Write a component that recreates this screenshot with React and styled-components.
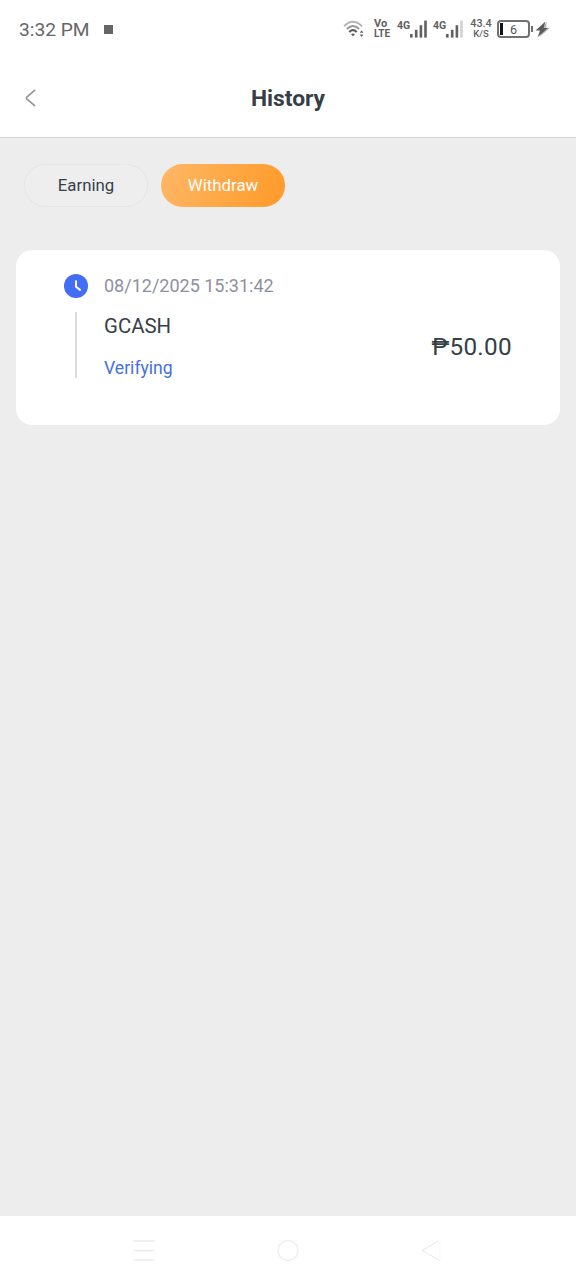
import React from 'react';
import styled, { createGlobalStyle } from 'styled-components';

const GlobalStyle = createGlobalStyle`
  * {
    box-sizing: border-box;
  }

  body {
    margin: 0;
    background-color: #ededed;
    font-family: Roboto, "Liberation Sans", sans-serif;
    color: #363e48;
  }

  button {
    font-family: inherit;
  }

  svg {
    display: block;
    flex-shrink: 0;
  }
`;

const Wifi = () => (
  <svg width="22" height="18" viewBox="0 0 22 18" fill="none">
    <path d="M1 6.2Q10 -2.6 19 6.2" stroke="#b4b4b4" strokeWidth="2" />
    <path d="M3.9 9Q10 2.8 16.1 9" stroke="#999999" strokeWidth="2" />
    <path d="M6.3 12Q10 8.4 13.7 12" stroke="#5c5c5c" strokeWidth="2.2" />
    <path d="M8 14Q10 12.8 12 14L10 16.4Z" fill="#5c5c5c" />
    <path d="M16.8 12.8L18.6 10.3L20.4 12.8ZM16.8 14.4L18.6 16.9L20.4 14.4Z" fill="#5c5c5c" />
  </svg>
);

const Signal = ({ weak }) => (
  <svg width="17" height="18" viewBox="0 0 17 18" fill="#606060">
    <rect x="0" y="14" width="2.6" height="3.6" />
    <rect x="4.9" y="9.8" width="2.6" height="7.8" />
    <rect x="9.6" y="5.2" width="2.6" height="12.4" />
    <rect x="14.2" y="0.6" width="2.6" height="17" fill={weak ? '#d2d2d2' : '#606060'} />
  </svg>
);

const Bolt = () => (
  <svg width="16" height="17" viewBox="0 0 16 17">
    <path d="M11.8 0.5L5.2 9.6H8.3L4 16.5L15 6.8H11Z" fill="#b5b5b5" />
    <path d="M10.4 0.5L0.6 9.4H5L2.6 16.2L12.8 7H8.6Z" fill="#5b5b5b" />
  </svg>
);

const Clock = () => (
  <svg width="24" height="24" viewBox="0 0 24 24">
    <circle cx="12" cy="12" r="12" fill="#446df6" />
    <path
      d="M12 7.2V12.7L16 15.9"
      fill="none"
      stroke="#ffffff"
      strokeWidth="2"
      strokeLinecap="round"
      strokeLinejoin="round"
    />
  </svg>
);

const App = () => {
  return (
    <Screen>
      <GlobalStyle />
      <StatusBar>
        <Time>3:32 PM</Time>
        <Recording />
        <StatusIcons>
          <Wifi />
          <Stacked $width={18} $gap={9}>
            <span>Vo</span>
            <span>LTE</span>
          </Stacked>
          <Network>4G</Network>
          <Signal />
          <Network $gap={6}>4G</Network>
          <Signal weak />
          <Stacked $width={22} $gap={7} $speed>
            <span>43.4</span>
            <span>K/S</span>
          </Stacked>
          <Battery>6</Battery>
          <Bolt />
        </StatusIcons>
      </StatusBar>
      <Header>
        <BackButton aria-label="Back">
          <svg width="12" height="18" viewBox="0 0 12 18" fill="none">
            <path
              d="M10.6 1.3L2.8 8.2Q2 9 2.8 9.8L10.6 16.7"
              stroke="#999999"
              strokeWidth="1.8"
              strokeLinecap="round"
            />
          </svg>
        </BackButton>
        <Title>History</Title>
      </Header>
      <Content>
        <Tabs>
          <Tab>Earning</Tab>
          <Tab $active>Withdraw</Tab>
        </Tabs>
        <Card>
          <Timeline>
            <Clock />
            <Line />
          </Timeline>
          <Details>
            <DateText>08/12/2025 15:31:42</DateText>
            <Method>GCASH</Method>
            <Status>Verifying</Status>
          </Details>
          <Amount>₱50.00</Amount>
        </Card>
      </Content>
      <NavBar>
        <svg width="24" height="24" viewBox="0 0 24 24" stroke="#ebebeb" strokeWidth="1.4">
          <path d="M1.5 2H22.5M1.5 11.5H22.5M1.5 21H22.5" />
        </svg>
        <svg width="24" height="24" viewBox="0 0 24 24" fill="none" stroke="#eeeeee" strokeWidth="1.4">
          <circle cx="12" cy="11.5" r="10" />
        </svg>
        <svg width="24" height="24" viewBox="0 0 24 24" fill="none" strokeWidth="1.3">
          <path d="M20 2V21" stroke="#f9f9f9" />
          <path d="M18 2L2.5 11.5L19.5 21.5" stroke="#ececec" />
        </svg>
      </NavBar>
    </Screen>
  );
};

const Screen = styled.div`
  display: flex;
  flex-direction: column;
  width: 576px;
  height: 1280px;
  overflow: hidden;
`;

const StatusBar = styled.div`
  display: flex;
  align-items: center;
  height: 60px;
  padding: 0 25px 2px 19px;
  background-color: #ffffff;
`;

const Time = styled.div`
  width: 85px;
  padding-top: 1px;
  font-size: 19.2px;
  line-height: 24px;
  color: #666666;
`;

const Recording = styled.div`
  width: 9px;
  height: 9px;
  background-color: #666666;
`;

const StatusIcons = styled.div`
  display: flex;
  align-items: center;
  margin-left: auto;
`;

const Stacked = styled.div`
  display: flex;
  flex-direction: column;
  width: ${({ $width }) => $width}px;
  margin-left: ${({ $gap }) => $gap}px;
  align-items: ${({ $speed }) => ($speed ? 'center' : 'flex-start')};
  font-size: ${({ $speed }) => ($speed ? 10.8 : 11)}px;
  font-weight: ${({ $speed }) => ($speed ? 500 : 700)};
  line-height: 10px;
  color: #606060;

  span:last-child {
    font-size: ${({ $speed }) => ($speed ? 9.5 : 10)}px;
  }
`;

const Network = styled.div`
  width: 13px;
  height: 18px;
  margin-left: ${({ $gap }) => $gap || 5}px;
  font-size: 10.5px;
  font-weight: 700;
  line-height: 11px;
  color: #606060;
`;

const Battery = styled.div`
  position: relative;
  width: 33px;
  height: 18px;
  margin: 0 5px 0 5px;
  border: 2px solid #707070;
  border-radius: 4px;
  font-size: 12.5px;
  line-height: 15px;
  text-align: center;
  color: #555555;

  &::before {
    content: '';
    position: absolute;
    top: 1px;
    left: 1px;
    width: 3px;
    height: 12px;
    background-color: #111111;
  }

  &::after {
    content: '';
    position: absolute;
    top: 4px;
    right: -5px;
    width: 2px;
    height: 6px;
    background-color: #707070;
  }
`;

const Header = styled.div`
  display: grid;
  grid-template-columns: 80px 1fr 80px;
  align-items: center;
  height: 78px;
  border-bottom: 1px solid #d6d6d6;
  background-color: #ffffff;
`;

const BackButton = styled.button`
  justify-self: start;
  margin: 0 0 1px 24px;
  padding: 0;
  border: none;
  background: none;
`;

const Title = styled.h1`
  margin: 1px 0 0;
  font-size: 22.8px;
  font-weight: 700;
  line-height: 28px;
  text-align: center;
`;

const Content = styled.div`
  flex: 1;
  padding: 26px 16px 0;
`;

const Tabs = styled.div`
  display: flex;
  gap: 13px;
  padding-left: 8px;
`;

const Tab = styled.button`
  width: 124px;
  height: 43px;
  padding: 0 0 1px;
  border: ${({ $active }) => ($active ? 'none' : '1px solid #e5e5e5')};
  border-radius: 22px;
  background: ${({ $active }) =>
    $active ? 'linear-gradient(110deg, #ffb766, #ff9a27)' : '#eeeeee'};
  font-size: 16.8px;
  color: ${({ $active }) => ($active ? '#ffffff' : '#363e48')};
`;

const Card = styled.div`
  display: flex;
  height: 175px;
  margin-top: 43px;
  padding: 24px 48px 0;
  border-radius: 16px;
  background-color: #ffffff;
`;

const Timeline = styled.div`
  display: flex;
  flex-direction: column;
  align-items: center;
  width: 24px;
`;

const Line = styled.div`
  width: 2px;
  height: 66px;
  margin-top: 14px;
  background-color: #dcdcdc;
`;

const Details = styled.div`
  flex: 1;
  margin-left: 16px;
`;

const DateText = styled.div`
  font-size: 18px;
  line-height: 24px;
  color: #8d909f;
`;

const Method = styled.div`
  margin-top: 15px;
  font-size: 20.4px;
  line-height: 26px;
`;

const Status = styled.div`
  margin-top: 17px;
  font-size: 17.6px;
  line-height: 24px;
  color: #4670dc;
`;

const Amount = styled.div`
  margin-top: 58px;
  font-size: 24.3px;
  line-height: 30px;
  letter-spacing: 0.3px;
`;

const NavBar = styled.div`
  display: flex;
  align-items: center;
  justify-content: center;
  gap: 120px;
  height: 64px;
  padding-top: 5px;
  background-color: #ffffff;
`;

export default App;
